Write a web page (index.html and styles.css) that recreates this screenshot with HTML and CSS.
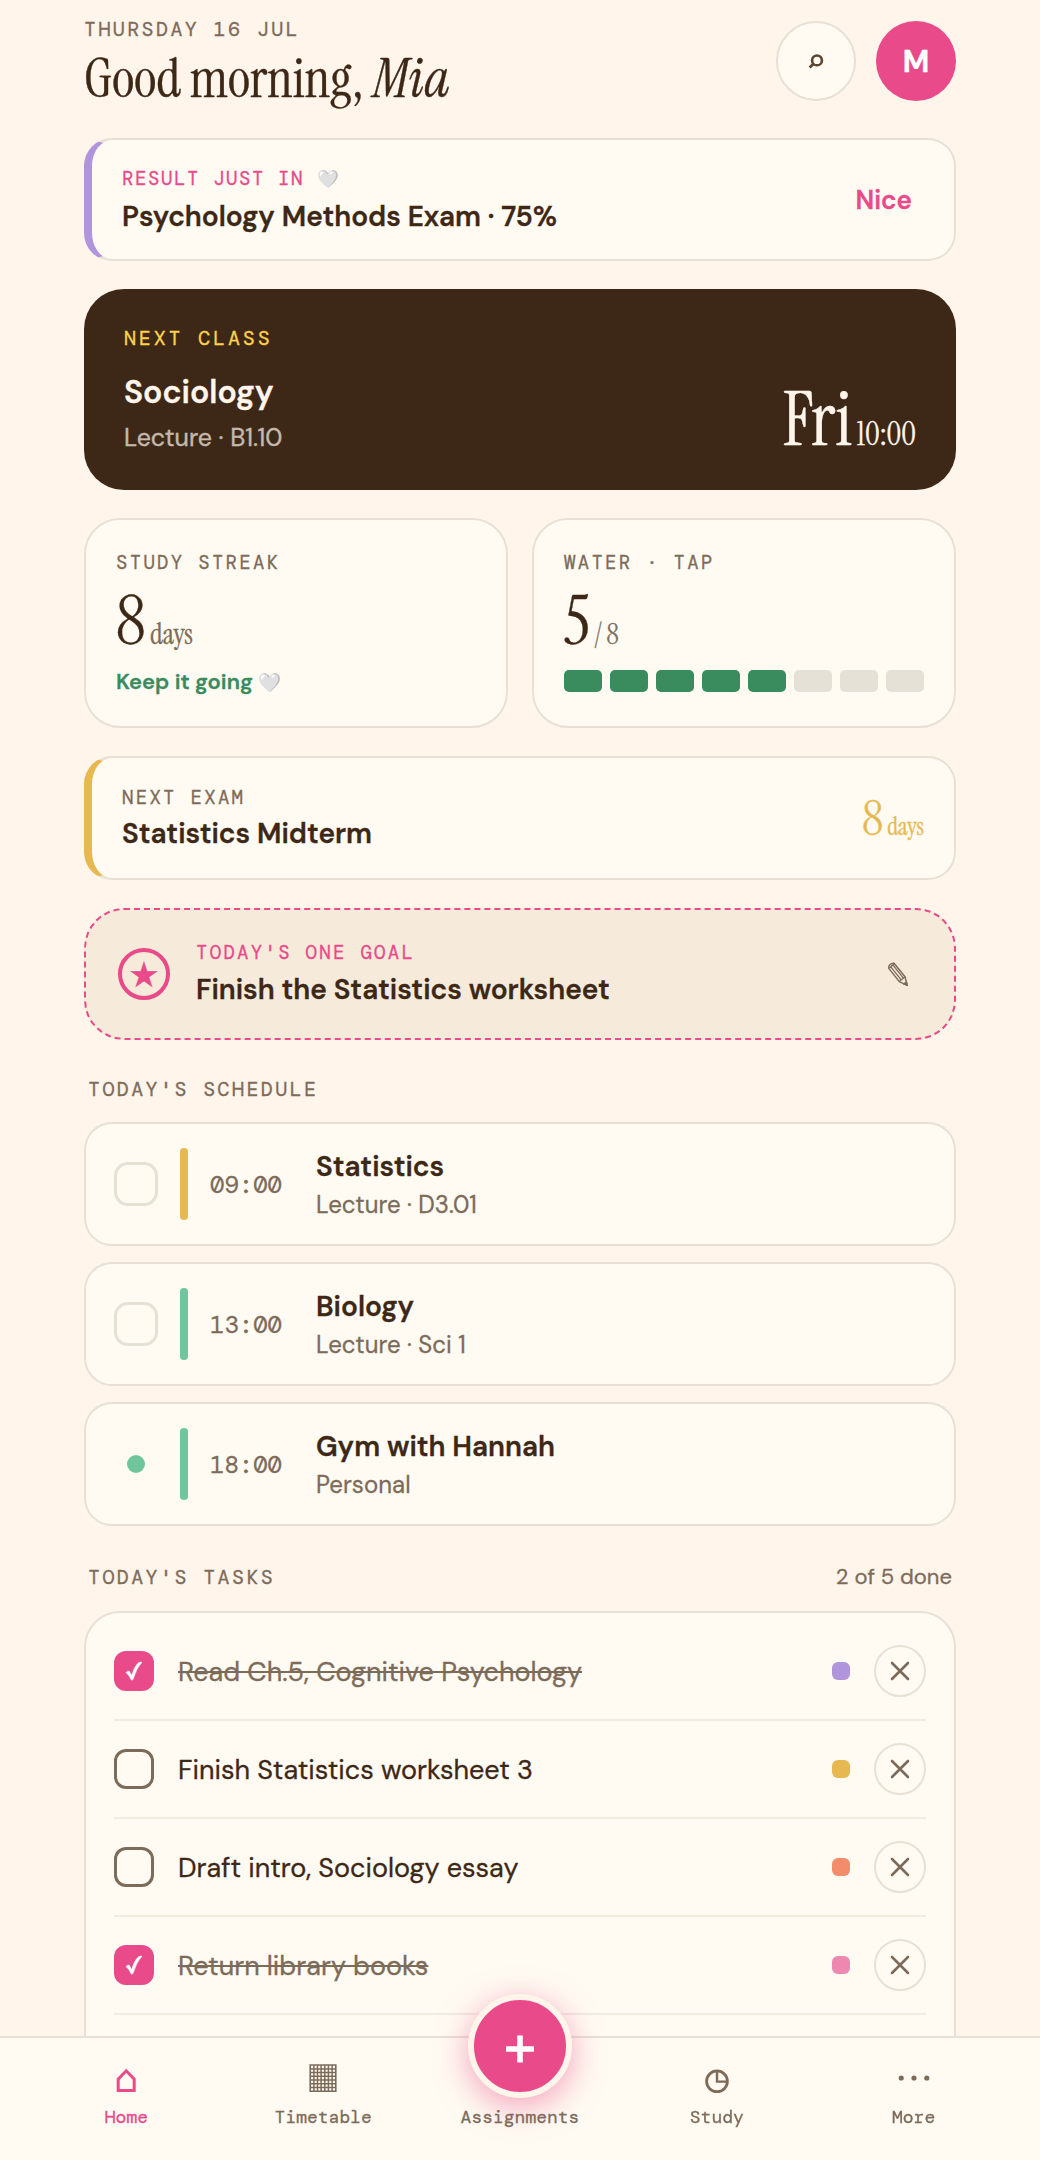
FILE: index.html
```html
<!DOCTYPE html>
<html lang="en">
<head>
<meta charset="utf-8">
<title>Student planner</title>
<link rel="stylesheet" href="styles.css">
</head>
<body>
<svg class="defs" width="0" height="0">
  <symbol id="check" viewBox="0 0 40 40"><path d="M12 21.5Q13.5 19.8 15.2 20L17.6 24.6Q21 14 24.8 11.6 26.5 10.8 28 11.2 22.5 17 19 28.6L17.4 29.2Q15 24 12 21.5Z" fill="currentColor" stroke="currentColor" stroke-width=".5"/></symbol>
  <symbol id="cross" viewBox="0 0 20 20"><path d="M2 2 18 18M18 2 2 18" fill="none" stroke="currentColor" stroke-width="2.6" stroke-linecap="round"/></symbol>
</svg>
<main class="page">
  <header class="header">
    <div>
      <p class="date">THURSDAY 16 JUL</p>
      <h1 class="greeting">Good morning, <em>Mia</em></h1>
    </div>
    <div class="header-actions">
      <button class="round-btn search"><svg width="20" height="20" viewBox="0 0 20 20" fill="none" stroke="currentColor"><circle cx="11" cy="9.4" r="4.9" stroke-width="2.6"/><path d="M7.6 12.8 3.6 16.6" stroke-width="2.8"/></svg></button>
      <button class="round-btn avatar">M</button>
    </div>
  </header>

  <section class="banner banner-result">
    <div>
      <p class="label label-result">RESULT JUST IN <span class="heart">🤍</span></p>
      <p class="title">Psychology Methods Exam · 75%</p>
    </div>
    <button class="nice">Nice</button>
  </section>

  <section class="next-class">
    <p class="next-label">NEXT CLASS</p>
    <div class="next-row">
      <div>
        <p class="next-title">Sociology</p>
        <p class="next-sub">Lecture · B1.10</p>
      </div>
      <p class="next-time">Fri <small>10:00</small></p>
    </div>
  </section>

  <div class="stats">
    <section class="stat">
      <p class="label">STUDY STREAK</p>
      <p class="stat-num">8 <small>days</small></p>
      <p class="cheer">Keep it going <span class="heart">🤍</span></p>
    </section>
    <section class="stat">
      <p class="label">WATER · TAP</p>
      <p class="stat-num">5 <small>/ 8</small></p>
      <div class="glasses">
        <i class="on"></i><i class="on"></i><i class="on"></i><i class="on"></i><i class="on"></i><i></i><i></i><i></i>
      </div>
    </section>
  </div>

  <section class="banner banner-exam">
    <div>
      <p class="label">NEXT EXAM</p>
      <p class="title">Statistics Midterm</p>
    </div>
    <p class="countdown">8 <small>days</small></p>
  </section>

  <section class="goal">
    <span class="goal-icon">★</span>
    <div class="goal-text">
      <p class="label label-pink">TODAY'S ONE GOAL</p>
      <p class="title">Finish the Statistics worksheet</p>
    </div>
    <button class="edit"><svg width="36" height="38" viewBox="0 0 36 38" fill="none" stroke="currentColor" stroke-linejoin="round"><path d="M19.3 26.6 8.8 13.4Q8 11.4 9.8 9.8 11.6 8 14 8.3L25 21.8 27.2 30.4Z" stroke-width="1.5"/><path d="M10.6 11.6 21.2 24.8M12.8 9.8 23.4 23.2M9.2 13.2 14 8.8M19.3 26.6 21.2 24.8 23.4 23.2 25 21.8" stroke-width="1.3"/><path d="M23.2 29 26.6 26.6 27.4 30.6Z" fill="currentColor"/></svg></button>
  </section>

  <div class="section-head"><h2>TODAY'S SCHEDULE</h2></div>
  <div class="schedule">
    <article class="event">
      <span class="event-check"></span>
      <span class="bar gold"></span>
      <time>09:00</time>
      <div>
        <p class="title">Statistics</p>
        <p class="sub">Lecture · D3.01</p>
      </div>
    </article>
    <article class="event">
      <span class="event-check"></span>
      <span class="bar mint"></span>
      <time>13:00</time>
      <div>
        <p class="title">Biology</p>
        <p class="sub">Lecture · Sci 1</p>
      </div>
    </article>
    <article class="event">
      <span class="event-dot mint"></span>
      <span class="bar mint"></span>
      <time>18:00</time>
      <div>
        <p class="title">Gym with Hannah</p>
        <p class="sub">Personal</p>
      </div>
    </article>
  </div>

  <div class="section-head"><h2>TODAY'S TASKS</h2><span class="done-count">2 of 5 done</span></div>
  <ul class="tasks">
    <li class="done"><span class="check"><svg width="40" height="40"><use href="#check"/></svg></span><span class="task-name">Read Ch.5, Cognitive Psychology</span><span class="tag purple"></span><button class="remove"><svg width="20" height="20"><use href="#cross"/></svg></button></li>
    <li><span class="check"></span><span class="task-name">Finish Statistics worksheet 3</span><span class="tag gold"></span><button class="remove"><svg width="20" height="20"><use href="#cross"/></svg></button></li>
    <li><span class="check"></span><span class="task-name">Draft intro, Sociology essay</span><span class="tag coral"></span><button class="remove"><svg width="20" height="20"><use href="#cross"/></svg></button></li>
    <li class="done"><span class="check"><svg width="40" height="40"><use href="#check"/></svg></span><span class="task-name">Return library books</span><span class="tag pink"></span><button class="remove"><svg width="20" height="20"><use href="#cross"/></svg></button></li>
    <li></li>
  </ul>
</main>

<nav class="tabs">
  <a class="tab active"><svg class="tab-icon" viewBox="0 0 44 44"><path d="M14.2 34.4V23.2L22.2 14.8 30.2 23.2V34.4Z" fill="none" stroke="currentColor" stroke-width="3"/></svg>Home</a>
  <a class="tab"><svg class="tab-icon" viewBox="0 0 44 44" fill="none" stroke="currentColor"><path d="M9.2 9h25.6v26.2H9.2Z" stroke-width="1.6"/><path d="M12.9 9v26M16.5 9v26M20.1 9v26M23.8 9v26M27.4 9v26M31.1 9v26M9 12.9h26M9 16.6h26M9 20.3h26M9 24h26M9 27.7h26M9 31.4h26" stroke-width="1.5"/></svg>Timetable</a>
  <a class="tab"><span class="tab-icon"></span>Assignments<span class="fab"><svg width="28" height="28" viewBox="0 0 28 28"><path d="M14 .5v27M0 14h28" stroke="#fff" stroke-width="5.6"/></svg></span></a>
  <a class="tab"><svg class="tab-icon" viewBox="0 0 44 44" fill="none" stroke="currentColor"><circle cx="22" cy="25.3" r="10.4" stroke-width="2.8"/><path d="M22 15v10.6h10.4" stroke-width="2.4"/></svg>Study</a>
  <a class="tab"><svg class="tab-icon" viewBox="0 0 44 44" fill="currentColor"><circle cx="9.2" cy="22" r="2.6"/><circle cx="22" cy="22" r="2.6"/><circle cx="34.8" cy="22" r="2.6"/></svg>More</a>
</nav>
</body>
</html>
```
FILE: styles.css
```css
:root {
  --bg: #fff5eb;
  --card: #fffbf2;
  --line: #e8e0d5;
  --ink: #3d2817;
  --muted: #7d6b5a;
  --pink: #e84a8a;
  --gold: #e6b84f;
  --mint: #70c69c;
  --sans: "DM Sans", Inter, sans-serif;
  --mono: "DM Mono", "Liberation Mono", monospace;
  --serif: "Instrument Serif", "Liberation Serif", serif;
}
* { box-sizing: border-box; margin: 0; padding: 0; }
html, body { height: 2160px; overflow: hidden; }
body { background: var(--bg); color: var(--ink); font-family: var(--sans); -webkit-text-stroke: .3px; }
button { font-family: inherit; border: 0; background: none; color: inherit; }
ul { list-style: none; }
svg { display: block; }
.defs { position: absolute; }
.page { width: 872px; margin: 0 auto; padding-top: 16px; }

.header { display: flex; justify-content: space-between; align-items: center; height: 90px; margin-bottom: 32px; }
.date { font: 20px/26px var(--mono); letter-spacing: 2.4px; color: var(--muted); }
.greeting { font: 400 54px/60px var(--serif); margin: 7px 0 -3px; }
.header-actions { display: flex; gap: 20px; }
.round-btn { width: 80px; height: 80px; border-radius: 50%; display: flex; align-items: center; justify-content: center; }
.search { border: 2px solid var(--line); background: var(--card); color: #5c4530; }
.avatar { background: var(--pink); color: #fff; font-size: 30px; font-weight: 700; }

.label { font: 19px/25px var(--mono); letter-spacing: 2.3px; color: var(--muted); }
.label-result { letter-spacing: 1.6px; color: var(--pink); }
.label-pink { color: var(--pink); }
.heart { font-size: .92em; line-height: 1; }
.title { font-size: 28px; line-height: 36px; font-weight: 600; }

.banner { display: flex; justify-content: space-between; align-items: center; background: var(--card); border: 2px solid var(--line); border-left-width: 8px; border-radius: 28px; padding: 0 30px; }
.banner .title { margin-top: 6px; }
.goal .title { margin-top: 7px; }
.banner-result { height: 123px; border-left-color: #b094dc; }
.banner-result .title { margin-top: 8px; margin-bottom: -1px; }
.banner-exam { height: 124px; border-left-color: var(--gold); }
.nice { font-size: 26px; font-weight: 600; color: var(--pink); padding: 0 12px; }
.countdown { font: 48px/60px var(--serif); color: var(--gold); padding-top: 1px; word-spacing: -4px; }
.countdown small { font-size: 24px; line-height: 1; }

.next-class { height: 201px; margin: 28px 0; padding: 36px 40px; border-radius: 40px; background: var(--ink); color: #fff5eb; }
.next-label { font: 20px/26px var(--mono); letter-spacing: 2.85px; color: #ffd24d; }
.next-row { display: flex; justify-content: space-between; align-items: flex-end; margin-top: 20px; }
.next-title { font-size: 32px; line-height: 42px; font-weight: 600; }
.next-sub { font-size: 25px; line-height: 32px; margin: 9px 0 -1px; opacity: .7; }
.next-time { font: 76px/60px var(--serif); padding-bottom: 3px; word-spacing: -8px; }
.next-time small { font-size: 32px; line-height: 1; }

.stats { display: grid; grid-template-columns: 1fr 1fr; gap: 24px; margin-bottom: 28px; }
.stat { height: 210px; padding: 30px; border: 2px solid var(--line); border-radius: 36px; background: var(--card); }
.stat-num { font: 68px/68px var(--serif); margin: 12px 0; word-spacing: -7px; }
.stat-num small { font-size: 28px; line-height: 1; color: var(--muted); word-spacing: 0; }
.cheer { font-size: 22px; line-height: 29px; font-weight: 600; color: #3a8b5e; }
.cheer .heart { font-size: .84em; }
.glasses { display: grid; grid-template-columns: repeat(8, 1fr); gap: 8px; margin-top: 15px; }
.glasses i { height: 22px; border-radius: 5px; background: #e6e1d7; }
.glasses .on { background: #3a8b5e; }

.goal { display: flex; align-items: center; height: 132px; margin-top: 28px; padding: 0 30px 0 32px; border: 2px dashed var(--pink); border-radius: 40px; background: #f6ebda; }
.goal-icon { width: 52px; height: 52px; border: 4px solid var(--pink); border-radius: 50%; color: var(--pink); font-size: 31px; line-height: 49px; text-align: center; }
.goal-text { flex: 1; margin-left: 26px; }
.edit { width: 52px; padding-left: 8px; color: var(--muted); }

.section-head { display: flex; justify-content: space-between; align-items: center; margin: 36px 4px 20px; }
.section-head h2 { font: 20px/26px var(--mono); letter-spacing: 2.4px; color: var(--muted); }
.done-count { font-size: 22px; line-height: 29px; color: var(--muted); }

.schedule { display: grid; gap: 16px; }
.event { display: flex; align-items: center; height: 124px; padding: 0 28px; border: 2px solid var(--line); border-radius: 28px; background: var(--card); }
.event-check { width: 44px; height: 44px; border: 3px solid #e6e1d5; border-radius: 14px; }
.event-dot { width: 18px; height: 18px; margin: 0 13px; border-radius: 50%; }
.bar { width: 8px; height: 72px; border-radius: 4px; margin: 0 22px; }
.event time { font: 24px/31px var(--mono); width: 106px; color: var(--muted); }
.sub { font-size: 24px; line-height: 31px; margin: 4px 0 -1px; letter-spacing: .04px; color: var(--muted); }

.tasks { height: 600px; padding: 10px 28px; border: 2px solid var(--line); border-radius: 36px; background: var(--card); }
.tasks li { display: flex; align-items: center; height: 98px; border-bottom: 2px solid #f1ebe0; }
.check { width: 40px; height: 40px; border: 3px solid var(--muted); border-radius: 12px; color: #fff; }
.done .check { background: var(--pink); border: 0; }
.task-name { flex: 1; margin-left: 24px; font-size: 27px; }
.done .task-name { color: var(--muted); text-decoration: line-through; }
.tag { width: 18px; height: 18px; border-radius: 6px; margin-right: 24px; }
.remove { width: 52px; height: 52px; display: flex; align-items: center; justify-content: center; border: 2px solid var(--line); border-radius: 50%; color: var(--muted); }
.gold { background: var(--gold); }
.mint { background: var(--mint); }
.purple { background: #b094dc; }
.coral { background: #f28c6b; }
.pink { background: #ee88b0; }

.tabs { position: fixed; left: 0; right: 0; bottom: 0; height: 124px; padding: 0 28px; display: grid; grid-template-columns: repeat(5, 1fr); border-top: 2px solid var(--line); background: var(--card); }
.tab { position: relative; display: flex; flex-direction: column; align-items: center; font: 18px/24px var(--mono); color: var(--muted); padding-top: 18px; }
.tab.active { color: var(--pink); }
.tab-icon { width: 44px; height: 44px; margin-bottom: 5px; }
.fab { position: absolute; top: -44px; width: 104px; height: 104px; display: flex; align-items: center; justify-content: center; padding-top: 6px; border: 6px solid #fff5eb; border-radius: 50%; background: var(--pink); box-shadow: 0 8px 32px rgba(232, 74, 138, .5); }
```
